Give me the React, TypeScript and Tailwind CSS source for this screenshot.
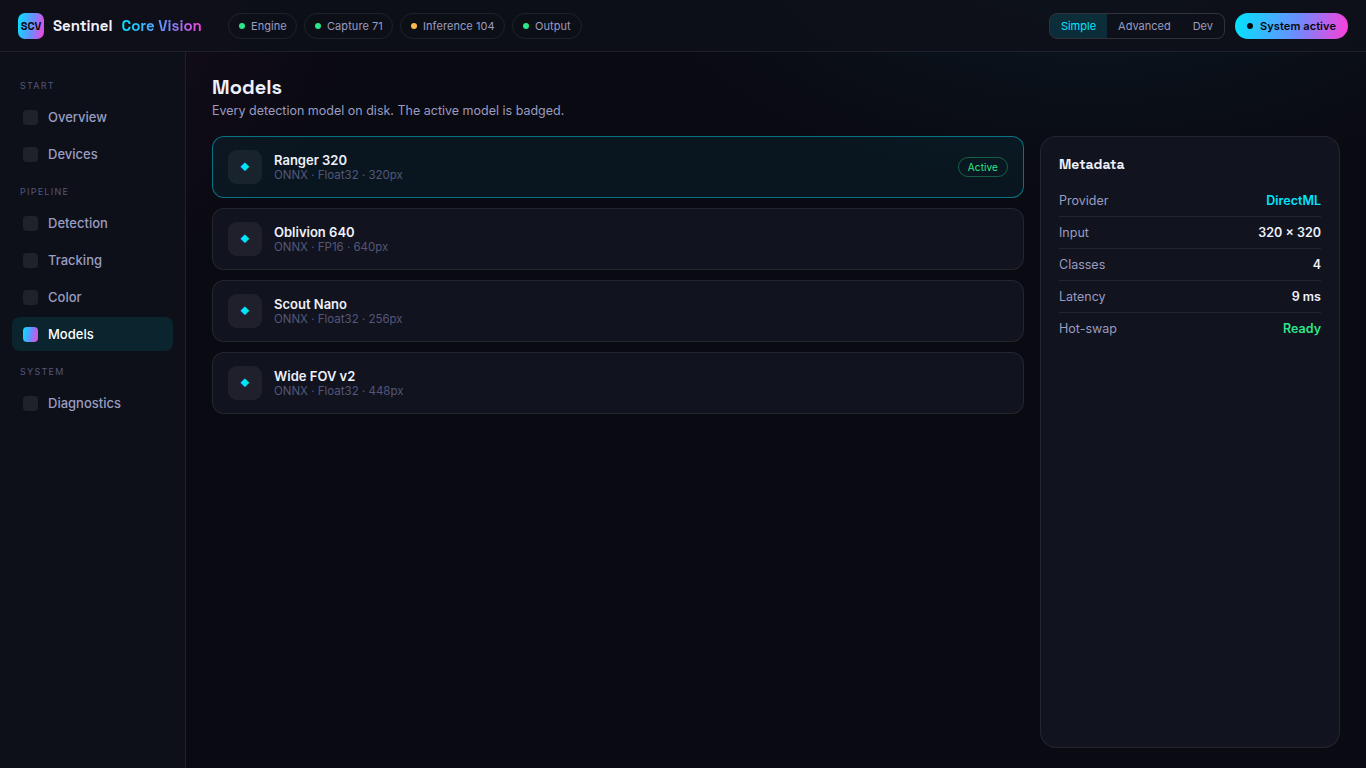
import React from 'react';
import clsx from 'clsx';

interface NavGroup {
  label: string;
  items: string[];
}

interface Model {
  name: string;
  format: string;
  active?: boolean;
}

const NAV: NavGroup[] = [
  { label: 'Start', items: ['Overview', 'Devices'] },
  { label: 'Pipeline', items: ['Detection', 'Tracking', 'Color', 'Models'] },
  { label: 'System', items: ['Diagnostics'] },
];

const STATUS = [
  { label: 'Engine', dot: 'bg-[#2ee68a]', width: 'w-[69px]' },
  { label: 'Capture 71', dot: 'bg-[#2ee68a]', width: 'w-[89px]' },
  { label: 'Inference 104', dot: 'bg-[#ffb84d]', width: 'w-[105px]' },
  { label: 'Output', dot: 'bg-[#2ee68a]', width: 'w-[70px]' },
];

const MODELS: Model[] = [
  { name: 'Ranger 320', format: 'ONNX · Float32 · 320px', active: true },
  { name: 'Oblivion 640', format: 'ONNX · FP16 · 640px' },
  { name: 'Scout Nano', format: 'ONNX · Float32 · 256px' },
  { name: 'Wide FOV v2', format: 'ONNX · Float32 · 448px' },
];

const METADATA = [
  { label: 'Provider', value: 'DirectML', color: 'text-[#00e5ff]' },
  { label: 'Input', value: '320 × 320', color: 'text-[#eef0fa]' },
  { label: 'Classes', value: '4', color: 'text-[#eef0fa]' },
  { label: 'Latency', value: '9 ms', color: 'text-[#eef0fa]' },
  { label: 'Hot-swap', value: 'Ready', color: 'text-[#2ee68a]' },
];

const Header: React.FC = () => (
  <header className="h-[52px] shrink-0 flex items-center px-[18px] border-b border-white/[0.08] bg-[#0e1019]/80">
    <div className="size-[26px] shrink-0 flex items-center justify-center rounded-[7px] pt-px bg-[linear-gradient(100deg,#00e5ff,#6c8cff_55%,#ff3dd8)] font-['Space_Grotesk',Inter,sans-serif] text-[11px] font-semibold text-[#05070d]">
      SCV
    </div>
    <div className="ml-[9px] w-[175px] shrink-0 flex gap-[9px] pt-0.5 font-['Space_Grotesk',Inter,sans-serif] text-[15px] font-bold whitespace-nowrap text-[#eef0fa]">
      <span>Sentinel</span>
      <span className="font-semibold bg-[linear-gradient(100deg,#00e5ff,#6c8cff_55%,#ff3dd8)] bg-clip-text text-transparent">
        Core Vision
      </span>
    </div>

    <div className="flex gap-[7px]">
      {STATUS.map((s) => (
        <div
          key={s.label}
          className={clsx(
            'h-[26px] flex items-center gap-1.5 pl-2.5 rounded-full border border-white/[0.08] text-[11px] leading-none tracking-[0.006em] whitespace-nowrap text-[#9a9cc0]',
            s.width
          )}
        >
          <span className={clsx('size-1.5 shrink-0 rounded-full', s.dot)} />
          <span className="pt-px">{s.label}</span>
        </div>
      ))}
    </div>

    <div className="ml-auto flex items-center gap-2.5">
      <div className="h-[26px] flex rounded-lg border border-white/[0.14] overflow-hidden text-[11px] leading-none text-[#9a9cc0]">
        <button className="px-[11px] pt-px bg-[#00e5ff]/[0.14] text-[#00e5ff]">Simple</button>
        <button className="px-[11px] pt-px">Advanced</button>
        <button className="px-[11px] pt-px">Dev</button>
      </div>
      <button className="w-[113px] h-[26px] flex items-center gap-[7px] pl-3 rounded-full whitespace-nowrap bg-[linear-gradient(100deg,#00e5ff,#6c8cff_55%,#ff3dd8)] text-[11px] leading-none tracking-[0.008em] font-semibold text-[#05070d]">
        <span className="size-1.5 shrink-0 rounded-full bg-[#05070d]" />
        <span className="pt-px">System active</span>
      </button>
    </div>
  </header>
);

const Sidebar: React.FC = () => (
  <nav className="w-[186px] shrink-0 px-3 pt-4 border-r border-white/[0.08] bg-[#0d1018]">
    {NAV.map((group) => (
      <div key={group.label}>
        <div className="h-8 pt-3 pl-2 text-[9px] leading-[11px] tracking-[0.14em] uppercase text-[#54567a]">
          {group.label}
        </div>
        {group.items.map((item) => {
          const active = item === 'Models';
          return (
            <div
              key={item}
              className={clsx(
                'h-[34px] mb-[3px] flex items-center gap-2.5 px-[11px] rounded-lg text-[13px] leading-4 font-medium',
                active ? 'bg-[#00e5ff]/10 text-white' : 'text-[#9a9cc0]'
              )}
            >
              <span
                className={clsx(
                  'size-[15px] rounded-[4px]',
                  active ? 'bg-[linear-gradient(100deg,#00e5ff,#6c8cff_55%,#ff3dd8)]' : 'bg-white/[0.08]'
                )}
              />
              {item}
            </div>
          );
        })}
      </div>
    ))}
  </nav>
);

const ModelRow: React.FC<{ model: Model }> = ({ model }) => (
  <div
    className={clsx(
      'h-[62px] flex items-center gap-3 px-[15px] rounded-xl border',
      model.active ? 'border-[#00e5ff]/45 bg-[#00e5ff]/[0.06]' : 'border-white/[0.08] bg-[#11131e]'
    )}
  >
    <div className="size-[34px] flex items-center justify-center rounded-[9px] bg-white/[0.06] text-[9px] leading-4 text-[#00e5ff]">
      ◆
    </div>
    <div className="flex-1">
      <div className="text-[13px] leading-4 font-semibold text-[#eef0fa]">{model.name}</div>
      <div className="text-[11.5px] leading-[14px] text-[#54567a]">{model.format}</div>
    </div>
    {model.active && (
      <span className="h-5 flex items-center px-[9px] rounded-full border border-[#2ee68a]/35 text-[10px] leading-3 tracking-[0.01em] text-[#2ee68a]">
        Active
      </span>
    )}
  </div>
);

const Metadata: React.FC = () => (
  <aside className="w-[300px] shrink-0 px-[18px] pt-[18px] rounded-2xl border border-white/[0.08] bg-[#11131e]">
    <h3 className="h-[30px] font-['Space_Grotesk',Inter,sans-serif] text-[14px] leading-[18px] font-semibold text-[#eef0fa]">
      Metadata
    </h3>
    {METADATA.map((row) => (
      <div
        key={row.label}
        className="h-8 pt-px flex items-center justify-between border-b border-white/[0.08] last:border-transparent text-[12.5px] leading-4 text-[#9a9cc0]"
      >
        <span>{row.label}</span>
        <b className={clsx('font-semibold', row.color)}>{row.value}</b>
      </div>
    ))}
  </aside>
);

export default function App() {
  return (
    <div className="h-screen flex flex-col overflow-hidden font-[Inter,sans-serif] bg-[#0a0a12] bg-[radial-gradient(800px_450px_at_80%_-10%,rgba(0,229,255,0.07),transparent_60%),radial-gradient(600px_500px_at_0%_0%,rgba(255,61,216,0.06),transparent_60%)]">
      <Header />
      <div className="flex-1 min-h-0 flex">
        <Sidebar />
        <main className="flex-1 min-w-0 flex flex-col pt-[22px] px-[26px] pb-5">
          <h1 className="font-['Space_Grotesk',Inter,sans-serif] text-[20px] leading-[26px] font-semibold text-[#eef0fa]">
            Models
          </h1>
          <p className="h-9 text-[12.5px] leading-[22px] text-[#9a9cc0]">
            Every detection model on disk. The active model is badged.
          </p>
          <div className="flex-1 min-h-0 flex gap-4">
            <div className="flex-1 flex flex-col gap-2.5">
              {MODELS.map((m) => (
                <ModelRow key={m.name} model={m} />
              ))}
            </div>
            <Metadata />
          </div>
        </main>
      </div>
    </div>
  );
}
